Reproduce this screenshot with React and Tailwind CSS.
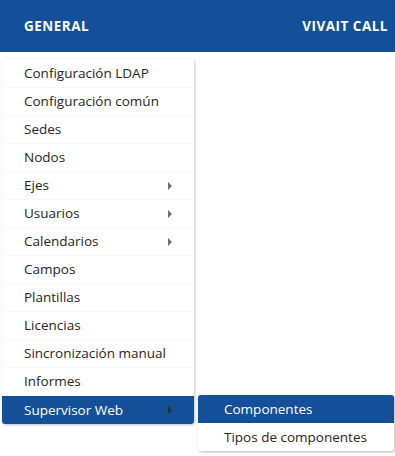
import React from 'react';

const items = [
  { label: 'Configuración LDAP' },
  { label: 'Configuración común' },
  { label: 'Sedes' },
  { label: 'Nodos' },
  { label: 'Ejes', sub: true },
  { label: 'Usuarios', sub: true },
  { label: 'Calendarios', sub: true },
  { label: 'Campos' },
  { label: 'Plantillas' },
  { label: 'Licencias' },
  { label: 'Sincronización manual' },
  { label: 'Informes' },
  { label: 'Supervisor Web', sub: true, active: true },
];

const subItems = [
  { label: 'Componentes', active: true },
  { label: 'Tipos de componentes' },
];

function Arrow({ dark }) {
  return (
    <span
      className={
        'block w-0 h-0 border-y-[4px] border-y-transparent border-l-[4px] ' +
        (dark ? 'border-l-[#2a2a2a]' : 'border-l-[#707070]')
      }
    />
  );
}

export default function App() {
  return (
    <div className="w-[395px] h-[456px] bg-white overflow-hidden font-['Open_Sans',sans-serif] text-[13.5px]">
      <div className="h-[52px] bg-[#14509a] flex items-center justify-between pl-6 pr-[7px] text-white font-bold text-[13.5px] tracking-[0.5px]">
        <span>GENERAL</span>
        <span>VIVAIT CALL</span>
      </div>

      <div className="mt-[7px] ml-[2px] w-[192px] pt-[1px] relative bg-white rounded-[3px] shadow-[1px_1px_3px_rgba(0,0,0,0.25)]">
        {items.map((item) => (
          <div
            key={item.label}
            className={
              'h-[28px] flex items-center justify-between pl-[22px] pr-[22px] ' +
              (item.active
                ? 'bg-[#14509a] text-white rounded-b-[3px]'
                : 'text-[#262626] border-b border-[#f8f8f8]')
            }
          >
            <span>{item.label}</span>
            {item.sub && <Arrow dark={item.active} />}
          </div>
        ))}

        <div className="absolute left-[196px] top-[336px] w-[196px] bg-white rounded-[3px] shadow-[1px_1px_3px_rgba(0,0,0,0.3)] overflow-hidden">
          {subItems.map((s) => (
            <div
              key={s.label}
              className={
                'h-[28px] flex items-center pl-[26px] ' +
                (s.active ? 'bg-[#14509a] text-white' : 'text-[#262626]')
              }
            >
              {s.label}
            </div>
          ))}
        </div>
      </div>
    </div>
  );
}
